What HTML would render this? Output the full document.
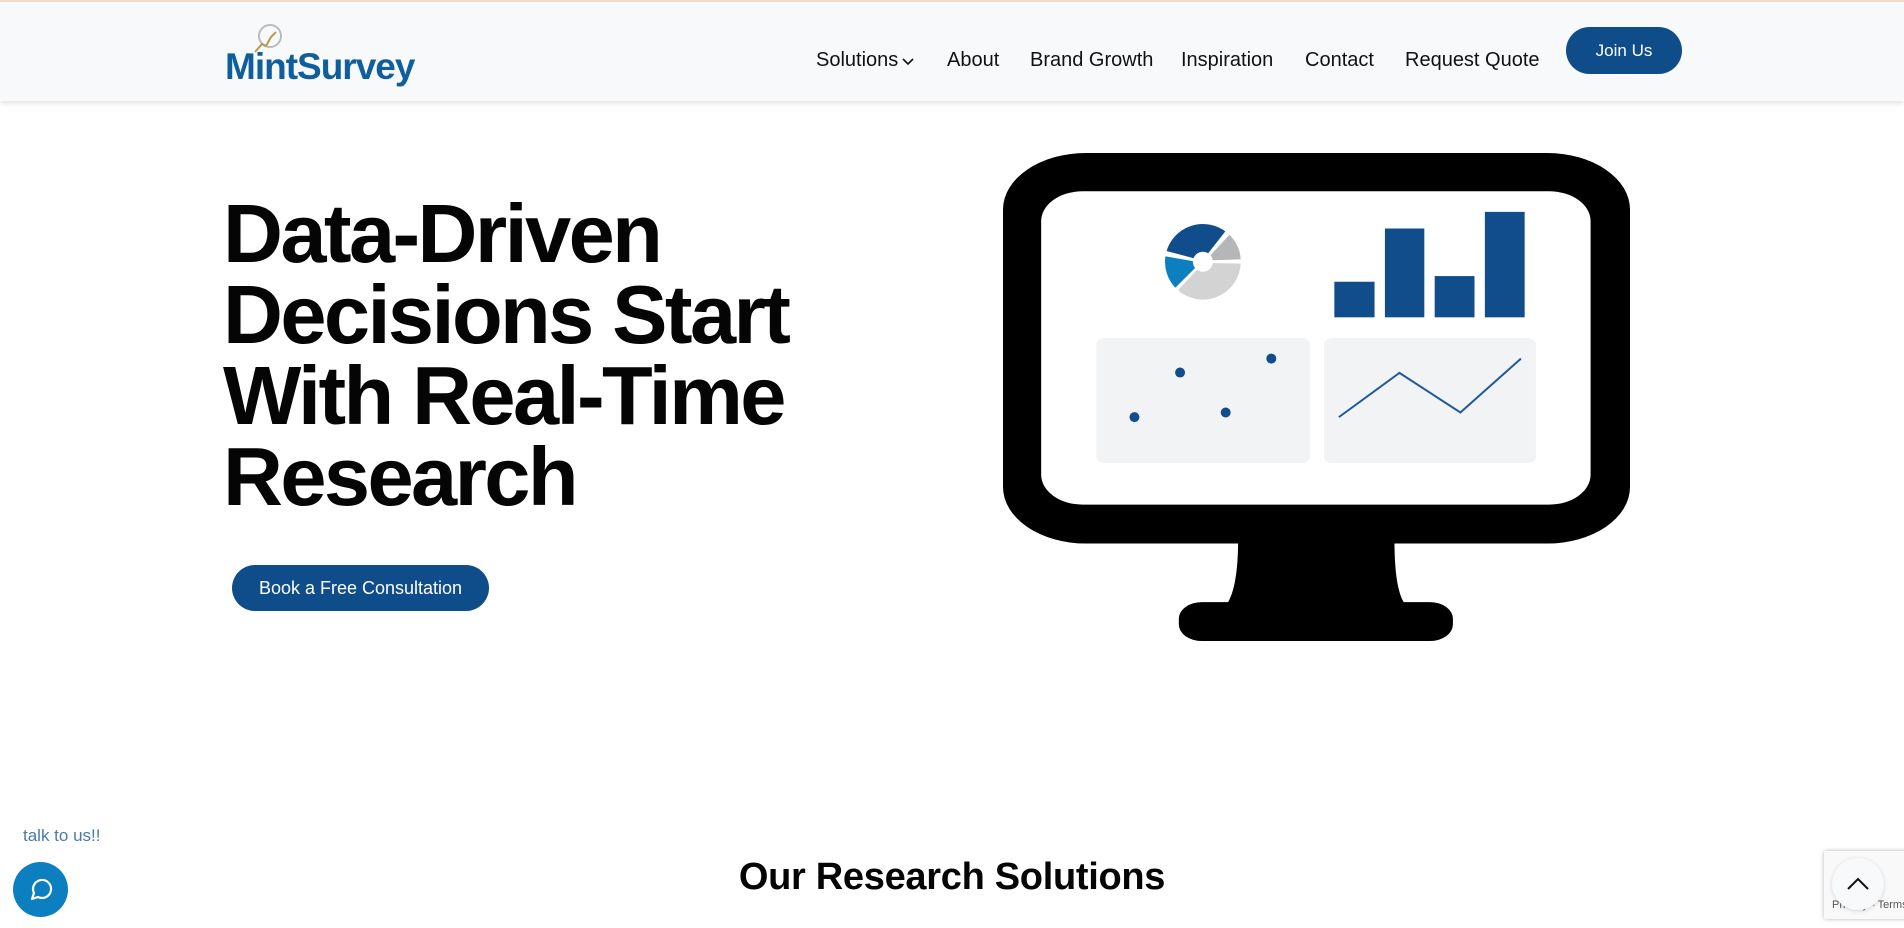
<!DOCTYPE html>
<html><head><meta charset="utf-8"><style>
*{margin:0;padding:0;box-sizing:border-box}
body{width:1904px;height:928px;overflow:hidden;background:#fff;font-family:"Liberation Sans",Arial,sans-serif;position:relative}
.hdr{position:absolute;left:0;top:0;width:1904px;height:101px;background:#f8f9fb;border-top:2px solid #f6d9cc;box-shadow:0 2px 5px rgba(0,0,0,.12)}
.logo{position:absolute;left:225px;top:44px;font-weight:bold;font-size:37px;color:#0f5f9e;letter-spacing:-1px}
.nav a{position:absolute;top:47px;font-size:20px;color:#111;text-decoration:none}
.join{position:absolute;left:1566px;top:25px;width:116px;height:47px;border-radius:24px;background:#0f4c8a;color:#fff;font-size:17px;text-align:center;line-height:47px}
h1{position:absolute;left:223px;top:193px;font-size:83px;line-height:81px;font-weight:bold;color:#050505;letter-spacing:-2.6px}
.btn{position:absolute;left:232px;top:565px;width:257px;height:46px;border-radius:23px;background:#0f4c8a;color:#fff;font-size:18px;text-align:center;line-height:46px}
h2{position:absolute;left:0;width:1904px;text-align:center;top:856px;font-size:38px;font-weight:bold;color:#050505;letter-spacing:-.3px}
</style></head><body>
<div class="hdr">
 <svg style="position:absolute;left:252px;top:20px" width="32" height="32"><circle cx="18" cy="14" r="11" fill="none" stroke="#bbb" stroke-width="2"/><polyline points="3,30 10,22 14,24 19,15 24,10" fill="none" stroke="#b89b4a" stroke-width="2"/></svg>
 <div class="logo">MintSurvey</div>
 <div class="nav">
  <a style="left:816px">Solutions<svg width="14" height="10" style="margin-left:3px"><polyline points="2,3 7,8 12,3" fill="none" stroke="#111" stroke-width="1.6"/></svg></a>
  <a style="left:947px">About</a>
  <a style="left:1030px">Brand Growth</a>
  <a style="left:1181px">Inspiration</a>
  <a style="left:1305px">Contact</a>
  <a style="left:1405px">Request Quote</a>
 </div>
 <div class="join">Join Us</div>
</div>
<h1>Data-Driven<br>Decisions Start<br>With Real-Time<br>Research</h1>
<div class="btn">Book a Free Consultation</div>
<svg style="position:absolute;left:1003px;top:153px" width="627" height="488" viewBox="8 38 1512 1467" preserveAspectRatio="none">
 <rect x="8" y="38" width="1512" height="1174" rx="200" ry="170" fill="#000"/>
 <path d="M575 1200 C575 1300 565 1360 550 1390 L975 1390 C960 1360 952 1300 952 1200 Z" fill="#000"/>
 <rect x="432" y="1388" width="661" height="117" rx="55" ry="50" fill="#000"/>
 <rect x="100" y="153" width="1325" height="942" rx="100" ry="90" fill="#fff"/>
 <rect x="233" y="594" width="515" height="376" rx="20" fill="#f2f3f5"/>
 <rect x="782" y="594" width="511" height="376" rx="20" fill="#f2f3f5"/>
 <g fill="#114d8a"><rect x="807" y="425" width="97" height="107"/><rect x="929" y="265" width="95" height="267"/><rect x="1049" y="408" width="96" height="124"/><rect x="1170" y="215" width="96" height="317"/>
 <ellipse cx="325" cy="832" rx="12" ry="15"/><ellipse cx="435" cy="698" rx="12" ry="15"/><ellipse cx="545" cy="818" rx="12" ry="15"/><ellipse cx="655" cy="656" rx="12" ry="15"/></g>
 <polyline points="818,832 964,699 1111,818 1257,656" fill="none" stroke="#1f5a96" stroke-width="2" vector-effect="non-scaling-stroke"/>
 <g transform="translate(490,365) scale(2.41,3)" stroke="#fff" stroke-width="2.2">
  <path d="M0 0 L39 0.7 A39 39 0 0 1 -26.5 28.6 Z" fill="#d3d3d3"/>
  <path d="M0 0 L-27.6 27.6 A39 39 0 0 1 -38.4 -6.8 Z" fill="#0b7fc0"/>
  <path d="M0 0 L-37.7 -10 A39 39 0 0 1 24 -30.7 Z" fill="#114d8a"/>
  <path d="M0 0 L26.5 -28.6 A39 39 0 0 1 39 -1.4 Z" fill="#b5b6b8"/>
  <circle r="10" fill="#fff" stroke="none"/>
 </g>
</svg>
<div style="position:absolute;left:23px;top:826px;font-size:17px;color:#4a7aa8">talk to us!!</div>
<div style="position:absolute;left:13px;top:862px;width:55px;height:55px;border-radius:50%;background:#0b7fc0"><svg width="55" height="55"><path d="M19 37 L21 31 A9 9 0 1 1 25 35 Z" fill="none" stroke="#fff" stroke-width="2.2" stroke-linejoin="round"/></svg></div>
<h2>Our Research Solutions</h2>
<div style="position:absolute;left:1824px;top:851px;width:84px;height:68px;background:#f9f9f9;box-shadow:0 0 4px rgba(0,0,0,.3);border-radius:2px;font-size:11px;color:#555;padding:48px 0 0 8px">Privacy - Terms</div>
<div style="position:absolute;left:1832px;top:858px;width:52px;height:52px;border-radius:50%;background:#f8f9fb;box-shadow:0 1px 4px rgba(0,0,0,.15)"><svg width="52" height="52"><polyline points="16,31 26,21 36,31" fill="none" stroke="#111" stroke-width="2"/></svg></div>
</body></html>
